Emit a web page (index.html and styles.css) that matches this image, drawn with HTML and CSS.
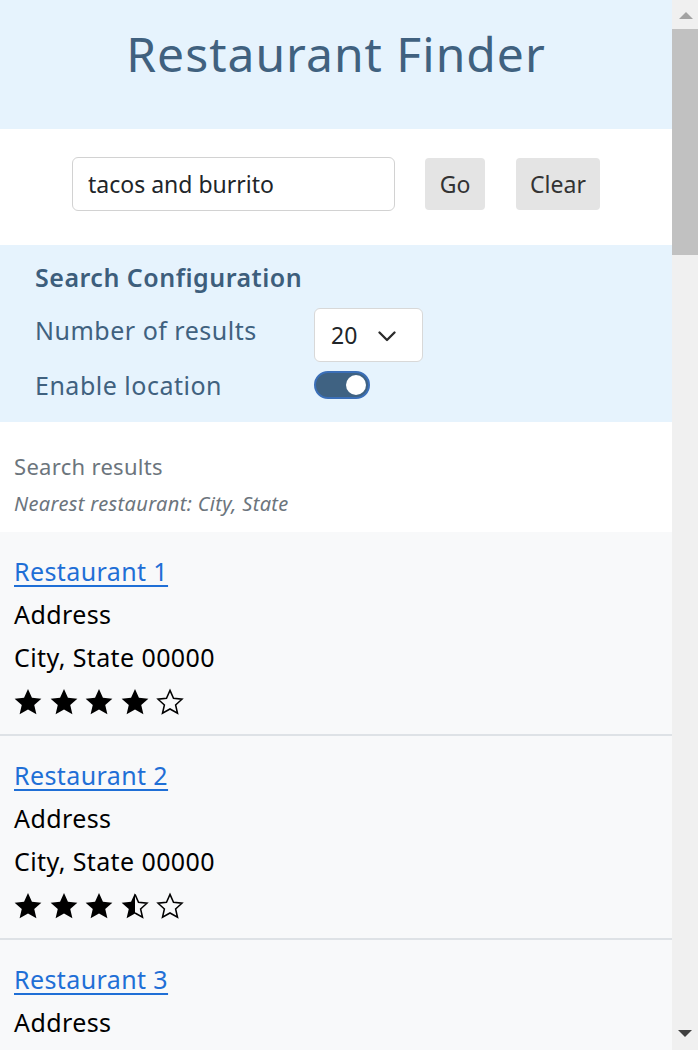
FILE: index.html
```html
<!DOCTYPE html>
<html lang="en">
<head>
<meta charset="utf-8">
<title>Restaurant Finder</title>
<link rel="stylesheet" href="styles.css">
</head>
<body>
<svg class="defs" aria-hidden="true">
  <symbol id="star-full" viewBox="1 1 22 22"><path d="M12 1.8l3.1 6.9 7.4.7-5.6 5 1.7 7.3L12 17.9l-6.6 3.8 1.7-7.3-5.6-5 7.4-.7z" fill="#000"/></symbol>
  <symbol id="star-empty" viewBox="1 1 22 22"><path d="M12 2.9l2.75 6.25 6.65.65-5 4.5 1.5 6.55L12 17.5l-5.9 3.35 1.5-6.55-5-4.5 6.65-.65z" fill="none" stroke="#000" stroke-width="1.2" stroke-linejoin="miter"/></symbol>
  <symbol id="star-half" viewBox="1 1 22 22"><path d="M12 1.8V17.9l-6.6 3.8 1.7-7.3-5.6-5 7.4-.7z" fill="#000"/><path d="M12 2.9l2.75 6.25 6.65.65-5 4.5 1.5 6.55L12 17.5" fill="none" stroke="#000" stroke-width="1.2"/></symbol>
</svg>

<div class="app">
<main class="page">
<header class="hero">
  <h1 class="hero-title">Restaurant Finder</h1>
</header>

<section class="search">
  <input class="search-input" type="text" value="tacos and burrito">
  <button class="btn btn-go" type="button">Go</button>
  <button class="btn btn-clear" type="button">Clear</button>
</section>

<section class="config">
  <h2 class="config-title">Search Configuration</h2>
  <div class="config-grid">
    <span class="config-label config-label-top">Number of results</span>
    <div class="select">
      <span>20</span>
      <svg class="chevron" viewBox="0 0 18 11"><path d="M1.5 1.5 L9 9 L16.5 1.5" fill="none" stroke="#2b2b2b" stroke-width="2.3" stroke-linecap="round" stroke-linejoin="round"/></svg>
    </div>
    <span class="config-label">Enable location</span>
    <span class="toggle"><span class="knob"></span></span>
  </div>
</section>

<section class="results-head">
  <p class="results-title">Search results</p>
  <p class="nearest">Nearest restaurant: City, State</p>
</section>

<ul class="results">
  <li class="card"><a class="card-link" href="#">Restaurant 1</a><div class="card-line">Address</div><div class="card-line">City, State 00000</div>
    <div class="stars"><svg class="star"><use href="#star-full"/></svg><svg class="star"><use href="#star-full"/></svg><svg class="star"><use href="#star-full"/></svg><svg class="star"><use href="#star-full"/></svg><svg class="star"><use href="#star-empty"/></svg></div></li>
  <li class="card"><a class="card-link" href="#">Restaurant 2</a><div class="card-line">Address</div><div class="card-line">City, State 00000</div>
    <div class="stars"><svg class="star"><use href="#star-full"/></svg><svg class="star"><use href="#star-full"/></svg><svg class="star"><use href="#star-full"/></svg><svg class="star"><use href="#star-half"/></svg><svg class="star"><use href="#star-empty"/></svg></div></li>
  <li class="card"><a class="card-link" href="#">Restaurant 3</a><div class="card-line">Address</div><div class="card-line">City, State 00000</div>
    <div class="stars"><svg class="star"><use href="#star-full"/></svg><svg class="star"><use href="#star-full"/></svg><svg class="star"><use href="#star-full"/></svg><svg class="star"><use href="#star-empty"/></svg><svg class="star"><use href="#star-empty"/></svg></div></li>
</ul>
</main>

<aside class="scrollbar" aria-hidden="true">
  <div class="sb-btn">
    <svg class="sb-arrow" viewBox="0 0 14 7"><polygon points="0,7 7,0 14,7" fill="#a3a3a3"/></svg>
  </div>
  <div class="sb-track">
    <div class="sb-thumb"></div>
  </div>
  <div class="sb-btn sb-btn-down">
    <svg class="sb-arrow" viewBox="0 0 14 7"><polygon points="0,0 14,0 7,7" fill="#404040"/></svg>
  </div>
</aside>
</div>
</body>
</html>
```

FILE: styles.css
```css
* { box-sizing: border-box; }

html, body {
  margin: 0;
  padding: 0;
  height: 100%;
  overflow: hidden;
}

body {
  font-family: "Noto Sans", "Open Sans", sans-serif;
  color: #000;
  background: #fff;
}

.defs {
  position: absolute;
  width: 0;
  height: 0;
  overflow: hidden;
}

.app {
  display: grid;
  grid-template-columns: 1fr 26px;
  height: 100vh;
}

.page {
  overflow-y: auto;
  scrollbar-width: none;
  min-width: 0;
}

/* scrollbar look-alike */
.scrollbar {
  background: #f0f0f0;
  display: flex;
  flex-direction: column;
}

.sb-btn {
  height: 29px;
  flex: none;
  display: flex;
  justify-content: center;
  padding-top: 12px;
  padding-left: 1px;
}

.sb-btn-down {
  padding-top: 9px;
  padding-left: 0;
}

.sb-arrow {
  width: 14px;
  height: 7px;
}

.sb-track {
  flex: 1;
}

.sb-thumb {
  height: 226px;
  background: #c1c1c1;
}

.hero {
  background: #e6f3fd;
  height: 129px;
  display: flex;
  justify-content: center;
  padding-top: 22px;
}

.hero-title {
  margin: 0;
  font-family: "Noto Sans", sans-serif;
  font-weight: 400;
  font-size: 48px;
  line-height: 64px;
  letter-spacing: 1px;
  color: #40617f;
}

.search {
  height: 116px;
  display: flex;
  justify-content: center;
  align-items: flex-start;
  padding-top: 28px;
  gap: 30px;
}

.search-input {
  width: 323px;
  height: 54px;
  border: 1px solid #d2d2d2;
  border-radius: 6px;
  padding: 0 15px;
  font-family: "Noto Sans", sans-serif;
  font-size: 23px;
  color: #212529;
  background: #fff;
  outline: none;
}

.btn {
  height: 52px;
  margin-top: 1px;
  padding: 0;
  border: none;
  border-radius: 4px;
  background: #e4e4e4;
  font-family: "Noto Sans", sans-serif;
  font-size: 23px;
  color: #333;
}

.btn-go { width: 60px; }
.btn-clear { width: 84px; margin-left: 1px; }

.config {
  background: #e6f3fd;
  height: 177px;
  padding: 14px 35px 0;
  color: #40617f;
}

.config-title {
  margin: 0;
  font-size: 25px;
  font-weight: 600;
  line-height: 36px;
  letter-spacing: 0.5px;
  color: #3d5e7c;
}

.config-grid {
  display: grid;
  grid-template-columns: 279px auto;
  grid-template-rows: 54px 28px;
  row-gap: 9px;
  margin-top: 13px;
  align-items: center;
  justify-items: start;
}

.config-label {
  font-size: 25px;
  line-height: 34px;
  letter-spacing: 0.5px;
}

.config-label-top {
  align-self: start;
  margin-top: 5px;
}

.select {
  width: 109px;
  height: 54px;
  border: 1px solid #d8d8d8;
  border-radius: 6px;
  background: #fff;
  display: flex;
  align-items: center;
  padding: 0 0 0 16px;
  gap: 21px;
  font-size: 23px;
  color: #212529;
}

.chevron {
  width: 18px;
  height: 11px;
  margin-top: 2px;
}

.toggle {
  width: 56px;
  height: 28px;
  border-radius: 14px;
  background: #3f6282;
  border: 2px solid #3b6fb8;
  display: flex;
  align-items: center;
  justify-content: flex-end;
  padding-right: 2px;
}

.knob {
  width: 20px;
  height: 20px;
  border-radius: 50%;
  background: #fff;
}

.results-head {
  height: 110px;
  padding: 28px 14px 0;
}

.results-title {
  margin: 0;
  font-size: 22px;
  line-height: 32px;
  letter-spacing: 0.3px;
  color: #6c757d;
}

.nearest {
  margin: 7px 0 0;
  font-size: 20px;
  line-height: 30px;
  letter-spacing: 0.35px;
  font-style: italic;
  color: #6c757d;
}

.results {
  list-style: none;
  margin: 0;
  padding: 0;
}

.card {
  background: #f8f9fa;
  border-bottom: 2px solid #dee2e6;
  padding: 18px 14px 14px;
  height: 204px;
}

.card-link {
  display: inline-block;
  font-size: 25px;
  line-height: 43px;
  letter-spacing: 0.4px;
  color: #1f6fd6;
  text-decoration: underline;
  text-underline-offset: 4px;
  text-decoration-thickness: 1.5px;
}

.card-line {
  font-size: 25px;
  line-height: 43px;
  letter-spacing: 0.4px;
}

.stars {
  display: flex;
  gap: 7.5px;
  height: 43px;
  align-items: center;
  padding-top: 2px;
}

.star {
  width: 28px;
  height: 28px;
}
```
